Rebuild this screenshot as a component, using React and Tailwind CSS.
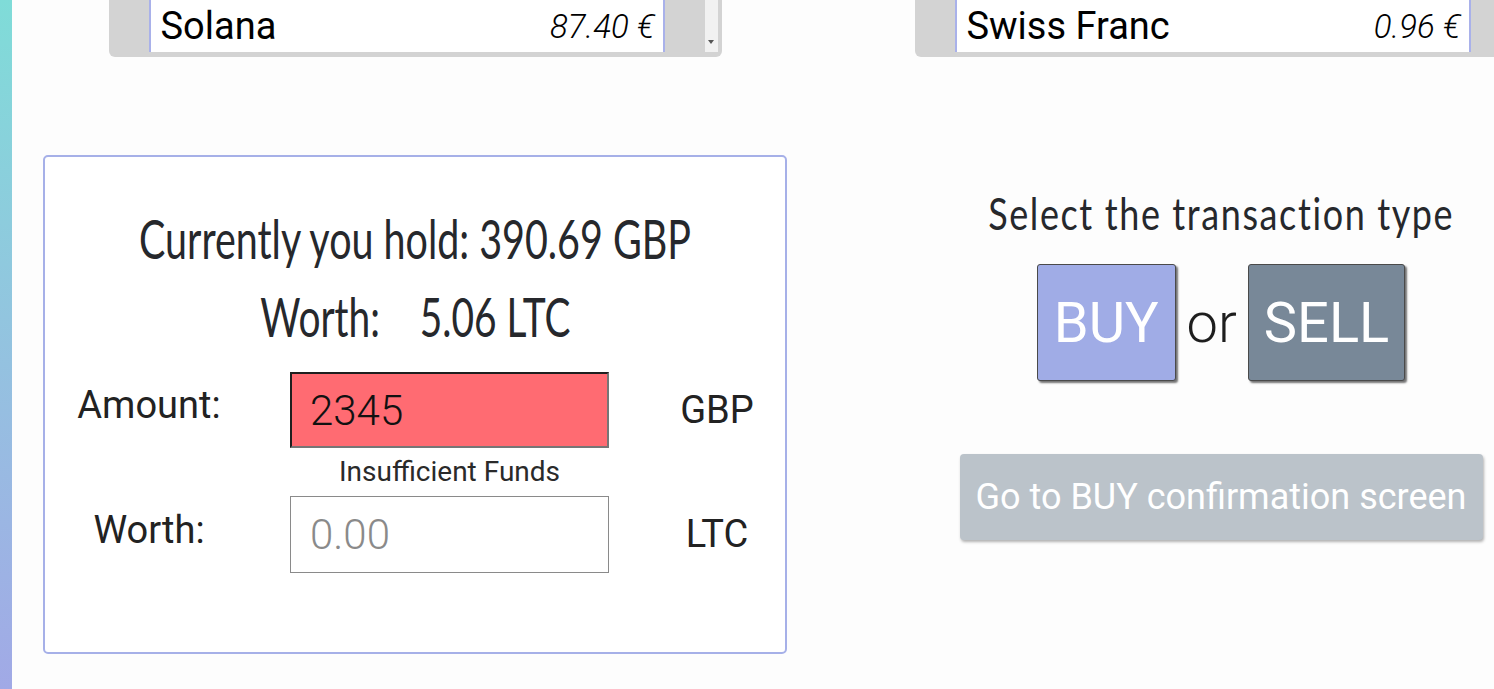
import { useState } from "react";

function ListBox({ name, price, scrollbar }) {
  return (
    <div className="flex h-[57px] w-[613px] shrink-0 items-start rounded-b-md bg-[#d3d3d3] pl-[40px] pr-[4px]">
      <div className="flex h-[52px] w-[516px] shrink-0 items-center justify-between border-x-2 border-[#a9b1ea] bg-white pl-[10px] pr-[8px]">
        <span className="text-[38px] leading-none text-black">{name}</span>
        <span className="text-[33px] font-light italic leading-none text-black">{price}</span>
      </div>
      <div className="flex-1" />
      {scrollbar && (
        <div className="flex h-[52px] w-[13px] items-end justify-center bg-[#f1f1f1] pb-[8px]">
          <svg width="6" height="4" viewBox="0 0 6 4">
            <path d="M0 0h6L3 4z" fill="#555" />
          </svg>
        </div>
      )}
    </div>
  );
}

export default function App() {
  const [amount, setAmount] = useState("2345");
  const [mode, setMode] = useState("BUY");

  return (
    <div className="flex h-[689px] w-[1494px] overflow-hidden bg-[#fdfdfd] font-['Roboto',sans-serif]">
      {/* side stripe */}
      <div className="w-[12px] shrink-0 bg-gradient-to-b from-[#7fdcd8] to-[#a1a9e6]" />

      <div className="grid w-[1612px] shrink-0 grid-cols-[806px_806px]">
        {/* ── LEFT COLUMN ── */}
        <div className="flex flex-col items-center">
          <ListBox name="Solana" price="87.40 €" scrollbar />

          <div className="mt-[98px] flex h-[499px] w-[744px] flex-col items-center rounded-[5px] border-2 border-[#a6b0e8] bg-white pt-[52px]">
            <div className="h-[60px] whitespace-nowrap text-center">
              <span className="inline-block scale-x-[0.73] font-['Lato',sans-serif] text-[54px] leading-[60px] text-[#26282c]">
                Currently you hold: 390.69 GBP
              </span>
            </div>
            <div className="mt-[18px] h-[60px] whitespace-nowrap text-center">
              <span className="inline-block scale-x-[0.72] font-['Lato',sans-serif] text-[54px] leading-[60px] text-[#26282c]">
                Worth:&nbsp;&nbsp;&nbsp; 5.06 LTC
              </span>
            </div>

            <div className="mt-[25px] grid grid-cols-[208px_319px_142px] items-center gap-x-[37px] self-start">
              <div className="pb-[9px] text-center text-[38px] text-[#222]">Amount:</div>
              <input
                value={amount}
                onChange={(e) => setAmount(e.target.value)}
                className="h-[76px] w-[319px] border-2 border-t-[#1f1f1f] border-l-[#1f1f1f] border-r-[#767676] border-b-[#767676] bg-[#ff6b72] px-[18px] text-[42px] font-light text-[#111] outline-none"
              />
              <div className="text-center text-[38px] text-[#222]">GBP</div>

              <div />
              <div className="flex h-[48px] items-center justify-center text-[28px] text-[#2a2a2a]">
                Insufficient Funds
              </div>
              <div />

              <div className="pb-[9px] text-center text-[38px] text-[#222]">Worth:</div>
              <input
                placeholder="0.00"
                className="h-[77px] w-[319px] border border-[#8a8a8a] bg-white px-[19px] text-[42px] font-light text-[#111] outline-none placeholder:text-[#8a8a8a]"
              />
              <div className="text-center text-[38px] text-[#222]">LTC</div>
            </div>
          </div>
        </div>

        {/* ── RIGHT COLUMN ── */}
        <div className="flex flex-col items-center">
          <ListBox name="Swiss Franc" price="0.96 €" />

          <div className="mt-[128px] h-[56px] whitespace-nowrap text-center">
            <span className="inline-block scale-x-[0.8] font-['Lato',sans-serif] text-[45px] leading-[56px] tracking-[2px] text-[#26282c]">
              Select the transaction type
            </span>
          </div>

          <div className="mt-[23px] flex items-center gap-[11px]">
            <button
              onClick={() => setMode("BUY")}
              className="h-[117px] rounded-[3px] border border-[#4a4a4a] bg-[#a0ace6] px-[16px] text-[56px] text-white shadow-[2px_2px_2px_rgba(0,0,0,0.55)]"
            >
              BUY
            </button>
            <span className="text-[56px] font-light text-[#1e1e1e]">or</span>
            <button
              onClick={() => setMode("SELL")}
              className="h-[117px] rounded-[3px] border border-[#4a4a4a] bg-[#788898] px-[15px] text-[56px] text-white shadow-[2px_2px_2px_rgba(0,0,0,0.55)]"
            >
              SELL
            </button>
          </div>

          <button className="mt-[73px] h-[86px] w-[523px] rounded-[4px] bg-[#bbc3ca] text-[36px] text-white shadow-[1px_2px_3px_rgba(0,0,0,0.3)]">
            Go to {mode} confirmation screen
          </button>
        </div>
      </div>
    </div>
  );
}
